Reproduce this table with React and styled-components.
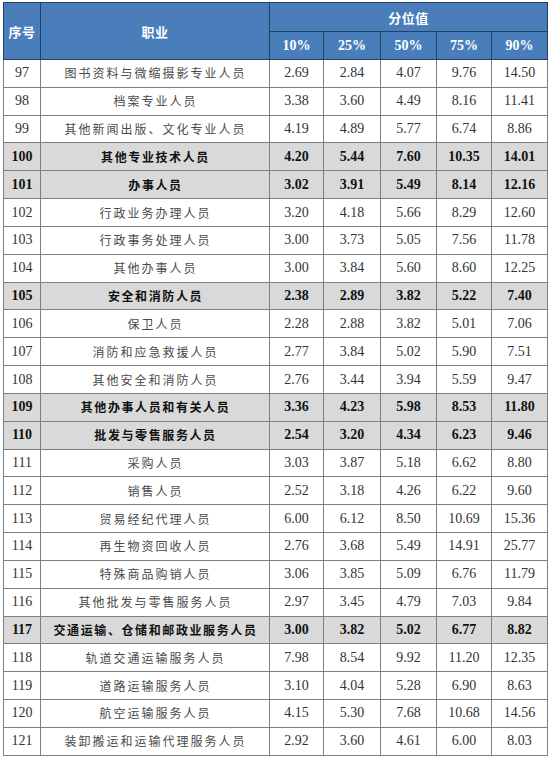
import styled, { createGlobalStyle } from "styled-components";

const GlobalStyle = createGlobalStyle`
  body {
    margin: 0;
    background: #ffffff;
  }
`;

const rows = [
  ["97", "图书资料与微缩摄影专业人员", ["2.69", "2.84", "4.07", "9.76", "14.50"]],
  ["98", "档案专业人员", ["3.38", "3.60", "4.49", "8.16", "11.41"]],
  ["99", "其他新闻出版、文化专业人员", ["4.19", "4.89", "5.77", "6.74", "8.86"]],
  ["100", "其他专业技术人员", ["4.20", "5.44", "7.60", "10.35", "14.01"], true],
  ["101", "办事人员", ["3.02", "3.91", "5.49", "8.14", "12.16"], true],
  ["102", "行政业务办理人员", ["3.20", "4.18", "5.66", "8.29", "12.60"]],
  ["103", "行政事务处理人员", ["3.00", "3.73", "5.05", "7.56", "11.78"]],
  ["104", "其他办事人员", ["3.00", "3.84", "5.60", "8.60", "12.25"]],
  ["105", "安全和消防人员", ["2.38", "2.89", "3.82", "5.22", "7.40"], true],
  ["106", "保卫人员", ["2.28", "2.88", "3.82", "5.01", "7.06"]],
  ["107", "消防和应急救援人员", ["2.77", "3.84", "5.02", "5.90", "7.51"]],
  ["108", "其他安全和消防人员", ["2.76", "3.44", "3.94", "5.59", "9.47"]],
  ["109", "其他办事人员和有关人员", ["3.36", "4.23", "5.98", "8.53", "11.80"], true],
  ["110", "批发与零售服务人员", ["2.54", "3.20", "4.34", "6.23", "9.46"], true],
  ["111", "采购人员", ["3.03", "3.87", "5.18", "6.62", "8.80"]],
  ["112", "销售人员", ["2.52", "3.18", "4.26", "6.22", "9.60"]],
  ["113", "贸易经纪代理人员", ["6.00", "6.12", "8.50", "10.69", "15.36"]],
  ["114", "再生物资回收人员", ["2.76", "3.68", "5.49", "14.91", "25.77"]],
  ["115", "特殊商品购销人员", ["3.06", "3.85", "5.09", "6.76", "11.79"]],
  ["116", "其他批发与零售服务人员", ["2.97", "3.45", "4.79", "7.03", "9.84"]],
  ["117", "交通运输、仓储和邮政业服务人员", ["3.00", "3.82", "5.02", "6.77", "8.82"], true],
  ["118", "轨道交通运输服务人员", ["7.98", "8.54", "9.92", "11.20", "12.35"]],
  ["119", "道路运输服务人员", ["3.10", "4.04", "5.28", "6.90", "8.63"]],
  ["120", "航空运输服务人员", ["4.15", "5.30", "7.68", "10.68", "14.56"]],
  ["121", "装卸搬运和运输代理服务人员", ["2.92", "3.60", "4.61", "6.00", "8.03"]],
];

const percentiles = ["10%", "25%", "50%", "75%", "90%"];
const widths = [37, 229, 54, 57, 56, 55, 56];

const Wrap = styled.div`
  padding: 2px 0 0 3px;
`;

const Table = styled.table`
  border-collapse: collapse;
  table-layout: fixed;
  width: 544px;
  border: 1px solid #5a5a5a;
`;

const HeadCell = styled.th`
  background: #4a7ebb;
  color: #ffffff;
  border: 1px solid #243f60;
  height: ${(p) => p.$h}px;
  padding: 0;
  line-height: 1;
  text-align: center;
  vertical-align: middle;
  font-weight: bold;
  font-family: ${(p) =>
    p.$num
      ? '"Liberation Serif", "Times New Roman", serif'
      : '"Noto Sans CJK SC", "Noto Sans", sans-serif'};
  font-size: ${(p) => (p.$num ? "14px" : "13px")};
  letter-spacing: ${(p) => (p.$num ? "0" : "0.5px")};
`;

const Row = styled.tr`
  height: 27.84px;
  background: ${(p) => (p.$bold ? "#d9d9d9" : "#ffffff")};
  font-weight: ${(p) => (p.$bold ? "bold" : "normal")};
`;

const Cell = styled.td`
  border: 1px solid #7f7f7f;
  padding: 0;
  line-height: 1;
  text-align: center;
  vertical-align: middle;
  white-space: nowrap;
  color: ${(p) => (p.$bold ? "#111111" : "#333333")};
  font-family: "Liberation Serif", "Times New Roman", serif;
  font-size: 14px;
`;

const NameCell = styled(Cell)`
  font-family: "Noto Sans CJK SC", "Noto Sans", sans-serif;
  font-size: 12px;
  letter-spacing: ${(p) => (p.$bold ? "1.6px" : "2px")};
  font-weight: ${(p) => (p.$bold ? 700 : 400)};
  color: ${(p) => (p.$bold ? "#111111" : "#4a4a4a")};
  padding-left: 1px;
`;

export default function App() {
  return (
    <Wrap>
      <GlobalStyle />
      <Table>
        <colgroup>
          {widths.map((w, i) => (
            <col key={i} style={{ width: w }} />
          ))}
        </colgroup>
        <thead>
          <tr>
            <HeadCell rowSpan={2} $h={28}>序号</HeadCell>
            <HeadCell rowSpan={2} $h={28}>职业</HeadCell>
            <HeadCell colSpan={5} $h={28}>分位值</HeadCell>
          </tr>
          <tr>
            {percentiles.map((p) => (
              <HeadCell key={p} $num $h={27}>
                {p}
              </HeadCell>
            ))}
          </tr>
        </thead>
        <tbody>
          {rows.map(([no, name, vals, bold]) => (
            <Row key={no} $bold={bold}>
              <Cell $bold={bold}>{no}</Cell>
              <NameCell $bold={bold}>{name}</NameCell>
              {vals.map((v, i) => (
                <Cell key={i} $bold={bold}>
                  {v}
                </Cell>
              ))}
            </Row>
          ))}
        </tbody>
      </Table>
    </Wrap>
  );
}
